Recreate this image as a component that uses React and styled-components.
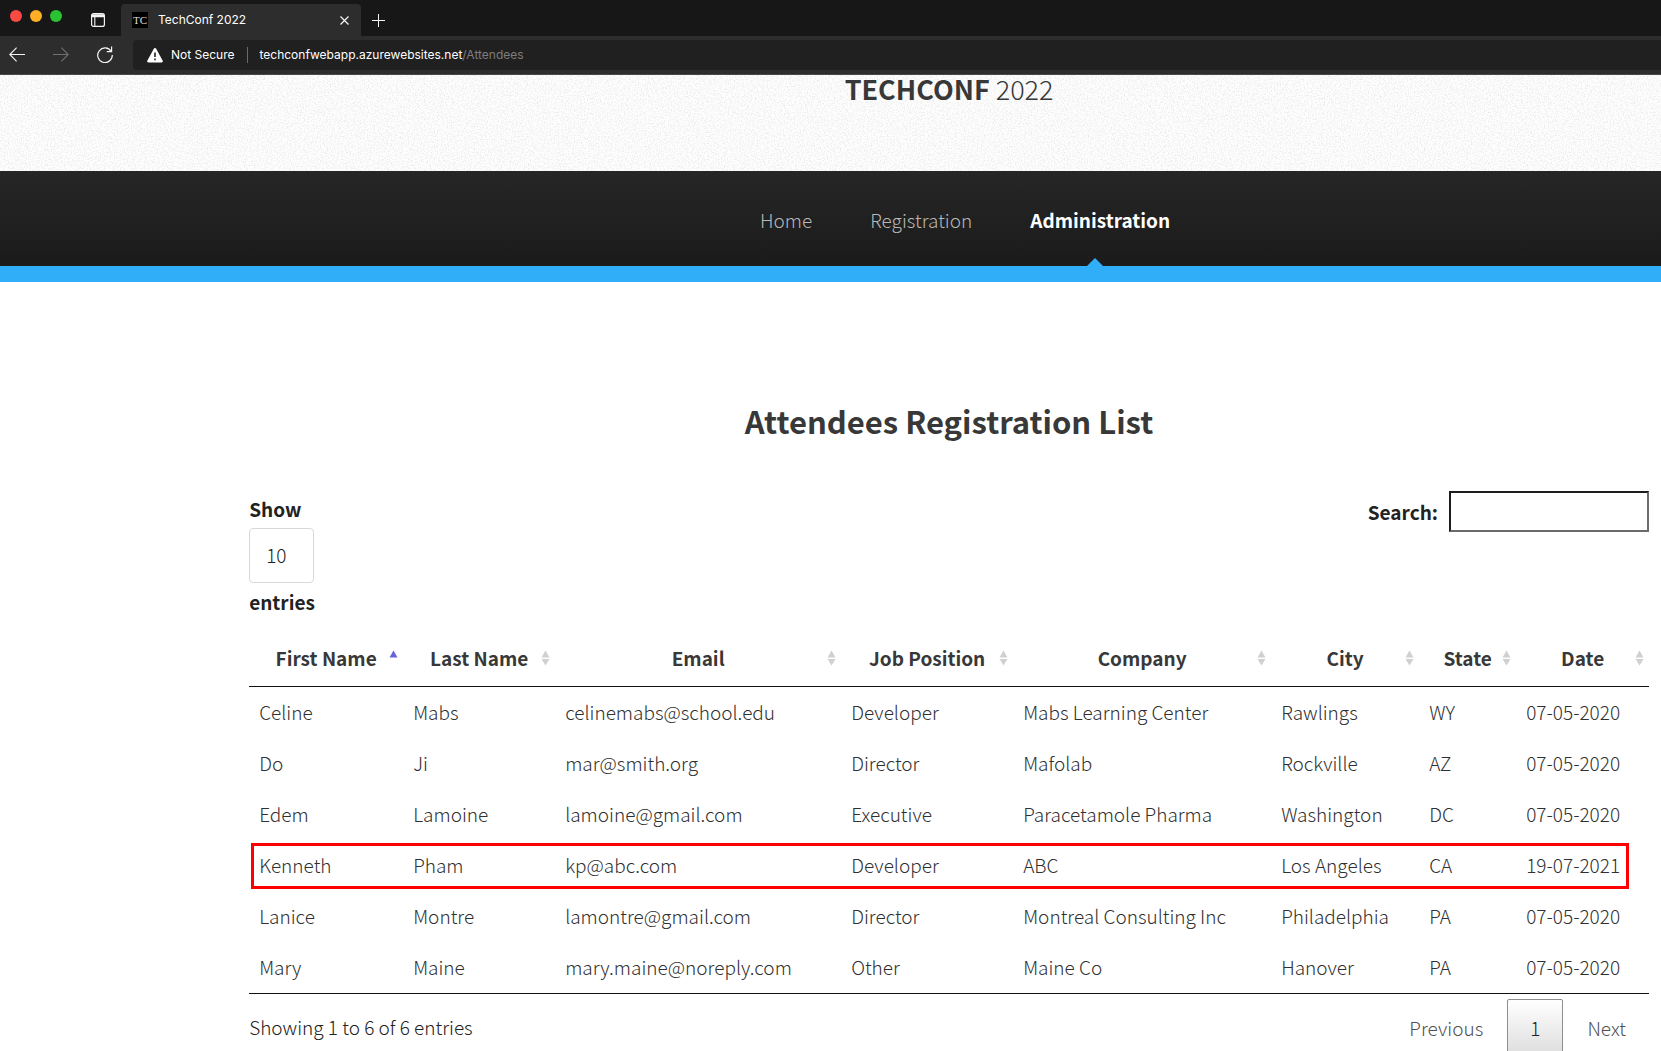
import React from "react";
import styled, { createGlobalStyle, css } from "styled-components";

const sans = `"Noto Sans CJK JP", "Noto Sans", sans-serif`;
const ui = `Inter, "Liberation Sans", sans-serif`;

const GlobalStyle = createGlobalStyle`
  *, *::before, *::after { box-sizing: border-box; }
  html, body { margin: 0; padding: 0; }
  html { height: 100%; }
  body {
    height: 100%;
    overflow: hidden;
    background: #fff;
    color: #303030;
    font-family: ${sans};
    font-size: 19px;
    font-weight: 300;
    line-height: 30px;
  }
  button, input, select { font: inherit; color: inherit; }
`;

/* Browser window */

const Chrome = styled.div`
  font-family: ${ui};
  font-size: 12px;
  font-weight: 400;
  line-height: 16px;
  color: #fff;
`;

const TabStrip = styled.div`
  display: flex;
  align-items: flex-end;
  height: 36px;
  padding-left: 10px;
  background: #171717;
`;

const WindowButtons = styled.div`
  display: flex;
  gap: 8px;
  margin-right: 16px;
  padding-bottom: 14px;
`;

const Light = styled.button`
  width: 12px;
  height: 12px;
  padding: 0;
  border: 0;
  border-radius: 50%;
  background: ${(p) => p.$color};
`;

const IconButton = styled.button`
  display: flex;
  align-items: center;
  justify-content: center;
  width: ${(p) => p.$width || 24}px;
  height: 32px;
  padding: 0;
  border: 0;
  background: none;
  color: ${(p) => (p.disabled ? "#6f6f6f" : "#f4f4f4")};
`;

const Tab = styled.div`
  display: flex;
  align-items: center;
  gap: 10px;
  width: 240px;
  height: 32px;
  margin-left: 3px;
  padding: 0 5px 0 11px;
  border-radius: 4px 4px 0 0;
  background: #2d2d2d;
`;

const Favicon = styled.span`
  width: 16px;
  height: 16px;
  background: #000;
  color: #ddd;
  font-family: "Liberation Serif", serif;
  font-size: 11px;
  line-height: 16px;
  text-align: center;
`;

const TabTitle = styled.span`
  flex: 1;
`;

const Toolbar = styled.div`
  display: flex;
  align-items: center;
  height: 39px;
  padding-bottom: 1px;
  background: #2d2d2d;
  border-bottom: 1px solid #484848;
`;

const AddressBar = styled.div`
  display: flex;
  flex: 1;
  align-items: center;
  height: 30px;
  margin-left: 11px;
  padding-left: 14px;
  border-radius: 4px 0 0 4px;
  background: #202020;
`;

const Security = styled.span`
  margin-left: 8px;
  padding-right: 12px;
  border-right: 1px solid #6a6a6a;
`;

const Url = styled.span`
  margin-left: 12px;
`;

const UrlPath = styled.span`
  color: #7d7d7d;
`;

/* Site */

const gutters = css`
  padding-left: 15%;
  padding-right: 12px;
`;

const Header = styled.header`
  ${gutters}
  position: relative;
  height: 96px;
  text-align: center;
`;

const Texture = styled.svg`
  position: absolute;
  inset: 0;
  width: 100%;
  height: 100%;
`;

const Logo = styled.h1`
  position: relative;
  margin: 0;
  color: #383838;
  font-size: 27px;
  font-weight: 300;
  line-height: 28px;

  strong { font-weight: 700; }
`;

const Nav = styled.nav`
  ${gutters}
  display: flex;
  justify-content: center;
  gap: 58px;
  height: 111px;
  background: linear-gradient(#262626, #1b1b1b);
  border-bottom: 16px solid #30aff8;
`;

const NavLink = styled.a`
  position: relative;
  display: flex;
  align-items: center;
  height: 95px;
  padding-top: 2px;
  color: ${(p) => (p.$active ? "#fff" : "#b8b8b8")};
  font-weight: ${(p) => (p.$active ? 700 : 300)};
  text-decoration: none;

  &:first-child { margin-left: 32px; }

  ${(p) => p.$active && css`
    &::after {
      content: "";
      position: absolute;
      bottom: 0;
      left: calc(50% - 13px);
      border: 8px solid transparent;
      border-top: 0;
      border-bottom-color: #30aff8;
    }
  `}
`;

const Main = styled.main`
  ${gutters}
  padding-top: 119px;
`;

const Title = styled.h2`
  margin: 0;
  color: #383838;
  font-size: 31px;
  font-weight: 700;
  line-height: 40px;
  text-align: center;
`;

const Controls = styled.div`
  display: flex;
  align-items: flex-start;
  justify-content: space-between;
  margin-top: 50px;
  color: #222;
  font-weight: 700;
`;

const LengthLabel = styled.label`
  display: flex;
  flex-direction: column;
  gap: 4px;
  padding-top: 3px;
`;

const LengthSelect = styled.select`
  appearance: none;
  width: 65px;
  height: 55px;
  padding: 0 16px 2px;
  border: 1px solid #d8d8d8;
  border-radius: 4px;
  background: #fff;
  font-weight: 300;
`;

const SearchLabel = styled.label`
  display: flex;
  align-items: center;
  gap: 11px;
`;

const SearchInput = styled.input`
  width: 200px;
  height: 41px;
  padding: 4px;
  border: 2px solid;
  border-color: #1d1d1d #6b6b6b #6b6b6b #1d1d1d;
  background: #fff;
`;

const Table = styled.table`
  width: 100%;
  margin-top: 13px;
  table-layout: fixed;
  border-collapse: separate;
  border-spacing: 0;
  border-bottom: 1px solid #111;
`;

const Col = styled.col`
  width: ${(p) => p.$width}px;
`;

const HeadCell = styled.th`
  position: relative;
  height: 57px;
  padding: 0 18px;
  border-bottom: 1px solid #111;
  color: #383838;
  font-weight: 700;
  text-align: center;
  white-space: nowrap;
`;

const SortIcon = styled.svg`
  position: absolute;
  top: 20px;
  right: 5px;
  width: 9px;
  height: 16px;
`;

const Row = styled.tr`
  position: relative;

  ${(p) => p.$marked && css`
    td:first-child::after {
      content: "";
      position: absolute;
      inset: 3px 20px 2px 2px;
      border: 3px solid #fe0000;
    }
  `}
`;

const Cell = styled.td`
  height: 51px;
  padding: 0 10px 2px;
  white-space: nowrap;
`;

const Footer = styled.footer`
  display: flex;
  justify-content: space-between;
  padding-top: 5px;
  color: #222;
`;

const Info = styled.div`
  padding-top: 13px;
`;

const Pages = styled.div`
  display: flex;
  gap: 1px;
`;

const PageButton = styled.button`
  height: 59px;
  padding: 0 22px 2px;
  border: 1px solid ${(p) => (p.$current ? "#8e8e8e" : "transparent")};
  border-radius: 2px;
  background: ${(p) => (p.$current ? "linear-gradient(#fff, #dcdcdc)" : "none")};
  color: ${(p) => (p.$current ? "#222" : "#505050")};
`;

const columns = [
  ["First Name", 154],
  ["Last Name", 152],
  ["Email", 286],
  ["Job Position", 172],
  ["Company", 258],
  ["City", 148],
  ["State", 97],
  ["Date", 133],
];

const attendees = [
  ["Celine", "Mabs", "celinemabs@school.edu", "Developer", "Mabs Learning Center", "Rawlings", "WY", "07-05-2020"],
  ["Do", "Ji", "mar@smith.org", "Director", "Mafolab", "Rockville", "AZ", "07-05-2020"],
  ["Edem", "Lamoine", "lamoine@gmail.com", "Executive", "Paracetamole Pharma", "Washington", "DC", "07-05-2020"],
  ["Kenneth", "Pham", "kp@abc.com", "Developer", "ABC", "Los Angeles", "CA", "19-07-2021"],
  ["Lanice", "Montre", "lamontre@gmail.com", "Director", "Montreal Consulting Inc", "Philadelphia", "PA", "07-05-2020"],
  ["Mary", "Maine", "mary.maine@noreply.com", "Other", "Maine Co", "Hanover", "PA", "07-05-2020"],
];

function Browser() {
  return (
    <Chrome>
      <TabStrip>
        <WindowButtons>
          <Light $color="#f94a44" aria-label="Close window" />
          <Light $color="#fcaf24" aria-label="Minimize window" />
          <Light $color="#2ac231" aria-label="Zoom window" />
        </WindowButtons>
        <IconButton $width={40} aria-label="Tab actions">
          <svg width="14" height="14" viewBox="0 0 14 14" fill="none" stroke="currentColor">
            <rect x="0.6" y="0.6" width="12.8" height="12.8" rx="2" strokeWidth="1.2" />
            <path d="M1 2h12M1 3.4h12" strokeWidth="1.6" />
            <path d="M3.8 4v9" strokeWidth="1.1" />
          </svg>
        </IconButton>
        <Tab>
          <Favicon>TC</Favicon>
          <TabTitle>TechConf 2022</TabTitle>
          <IconButton aria-label="Close tab">
            <svg width="9" height="9" viewBox="0 0 9 9" stroke="currentColor" strokeWidth="1.2">
              <path d="M0.5 0.5l8 8M8.5 0.5l-8 8" />
            </svg>
          </IconButton>
        </Tab>
        <IconButton $width={35} aria-label="New tab">
          <svg width="13" height="13" viewBox="0 0 13 13" stroke="currentColor">
            <path d="M6.5 0v13M0 6.5h13" />
          </svg>
        </IconButton>
      </TabStrip>
      <Toolbar>
        <IconButton $width={34} aria-label="Back">
          <svg width="16" height="15" viewBox="0 0 16 15" fill="none" stroke="currentColor" strokeWidth="1.1">
            <path d="M16 7.5H1M7.6 0.7L0.8 7.5l6.8 6.8" />
          </svg>
        </IconButton>
        <IconButton $width={54} disabled aria-label="Forward">
          <svg width="16" height="15" viewBox="0 0 16 15" fill="none" stroke="currentColor" strokeWidth="1.1">
            <path d="M0 7.5H15M8.4 0.7l6.8 6.8-6.8 6.8" />
          </svg>
        </IconButton>
        <IconButton $width={34} aria-label="Reload">
          <svg width="16" height="17" viewBox="0 0 16 17" fill="none" stroke="currentColor" strokeWidth="1.2">
            <path d="M14.2 5.4A7.3 7.3 0 1 0 15.3 9M14.6 0.6v5H9.8" />
          </svg>
        </IconButton>
        <AddressBar>
          <svg width="16" height="16" viewBox="0 0 16 16">
            <path d="M8 1c.5 0 .9.2 1.2.7l6.5 12c.4.8-.1 1.7-1 1.7H1.3c-.9 0-1.4-.9-1-1.7l6.5-12C7.1 1.2 7.5 1 8 1z" fill="#fff" />
            <path d="M8 5.5V10M8 11.5v1.7" stroke="#202020" strokeWidth="1.6" />
          </svg>
          <Security>Not Secure</Security>
          <Url>techconfwebapp.azurewebsites.net<UrlPath>/Attendees</UrlPath></Url>
        </AddressBar>
      </Toolbar>
    </Chrome>
  );
}

function Sort({ active }) {
  return (
    <SortIcon viewBox="0 0 9 16" aria-hidden="true">
      <path d="M4.5 0.5L8.5 7.5h-8z" fill={active ? "#6464d8" : "#d0d0d0"} />
      {!active && <path d="M0.5 9h8L4.5 15.5z" fill="#d0d0d0" />}
    </SortIcon>
  );
}

export default function App() {
  return (
    <>
      <GlobalStyle />
      <Browser />
      <Header>
        <Texture aria-hidden="true">
          <filter id="grain" x="0" y="0" width="100%" height="100%" colorInterpolationFilters="sRGB">
            <feTurbulence type="fractalNoise" baseFrequency="0.7" numOctaves="2" seed="4" />
            <feColorMatrix values="0 0 0 0 0.5  0 0 0 0 0.5  0 0 0 0 0.5  0.4 0 0 0 -0.16" />
          </filter>
          <rect width="100%" height="100%" filter="url(#grain)" />
        </Texture>
        <Logo><strong>TECHCONF</strong> 2022</Logo>
      </Header>
      <Nav>
        <NavLink href="#home">Home</NavLink>
        <NavLink href="#registration">Registration</NavLink>
        <NavLink href="#administration" $active>Administration</NavLink>
      </Nav>
      <Main>
        <Title>Attendees Registration List</Title>
        <Controls>
          <LengthLabel htmlFor="length">
            Show
            <LengthSelect id="length" defaultValue="10">
              <option>10</option>
            </LengthSelect>
            entries
          </LengthLabel>
          <SearchLabel htmlFor="search">
            Search:
            <SearchInput id="search" type="search" />
          </SearchLabel>
        </Controls>
        <Table>
          <colgroup>
            {columns.map(([name, width]) => <Col key={name} $width={width} />)}
          </colgroup>
          <thead>
            <tr>
              {columns.map(([name], i) => (
                <HeadCell key={name} scope="col">
                  {name}
                  <Sort active={i === 0} />
                </HeadCell>
              ))}
            </tr>
          </thead>
          <tbody>
            {attendees.map((row) => (
              <Row key={row[2]} $marked={row[0] === "Kenneth"}>
                {row.map((value, i) => <Cell key={i}>{value}</Cell>)}
              </Row>
            ))}
          </tbody>
        </Table>
        <Footer>
          <Info>Showing 1 to 6 of 6 entries</Info>
          <Pages>
            <PageButton>Previous</PageButton>
            <PageButton $current>1</PageButton>
            <PageButton>Next</PageButton>
          </Pages>
        </Footer>
      </Main>
    </>
  );
}
